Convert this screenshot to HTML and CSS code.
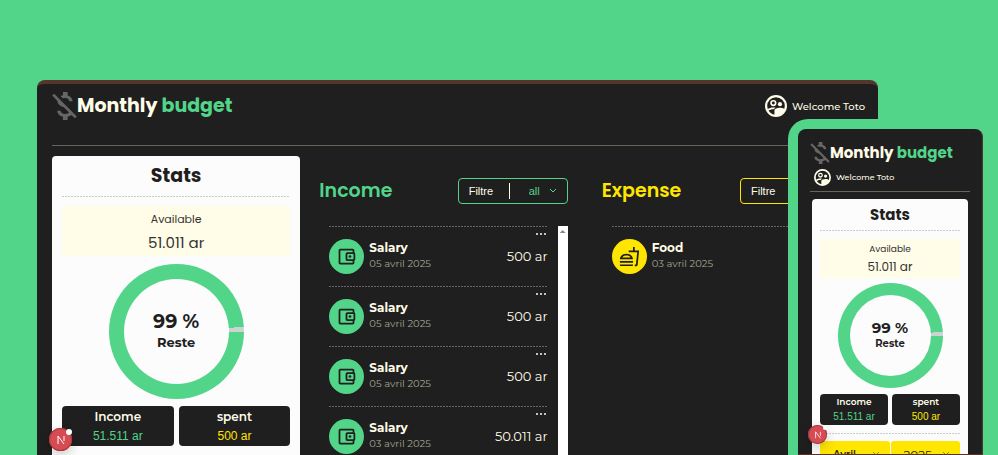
FILE: index.html
```html
<!DOCTYPE html>
<html lang="en">
<head>
<meta charset="utf-8">
<meta name="viewport" content="width=device-width, initial-scale=1">
<title>Monthly budget</title>
<link rel="stylesheet" href="styles.css">
</head>
<body>
<svg class="sprite" aria-hidden="true">
  <symbol id="logo" viewBox="4 3 16 18"><path d="M12.5 6.9c1.78 0 2.44.85 2.5 2.1h2.21c-.07-1.72-1.12-3.3-3.21-3.81V3h-3v2.16c-.53.12-1.03.3-1.48.54l1.47 1.47c.41-.17.91-.27 1.51-.27zM5.33 4.06L4.06 5.33 7.5 8.77c0 2.08 1.56 3.21 3.91 3.91l3.51 3.51c-.34.48-1.05.91-2.42.91-2.06 0-2.87-.92-2.98-2.1h-2.2c.12 2.19 1.76 3.42 3.68 3.83V21h3v-2.15c.96-.18 1.82-.55 2.45-1.12l2.22 2.22 1.27-1.27L5.33 4.06z"/></symbol>
  <symbol id="user" viewBox="2 2 20 20"><circle cx="12" cy="12" r="9" fill="none" stroke="currentColor" stroke-width="2"/><circle cx="9.6" cy="9.3" r="2.1" fill="none" stroke="currentColor" stroke-width="1.5"/><circle cx="15.6" cy="10.3" r="1.9"/><path d="M4.2 14.9c1.3-1.1 3.7-1.6 5.4-1.6.7 0 1.4.1 2.1.3-.9.4-1.5.9-1.8 1.4-1.8-.1-3.6.5-4.5 1.3z"/><path d="M10.6 21v-5c0-1.5 3-2.3 5-2.3 1.5 0 3.5.5 4.4 1.3-1.3 3.5-4.8 6-9.4 6z"/></symbol>
  <symbol id="wallet" viewBox="0 0 24 24"><path d="M21 7.28V5c0-1.1-.9-2-2-2H5c-1.11 0-2 .9-2 2v14c0 1.1.89 2 2 2h14c1.1 0 2-.9 2-2v-2.28c.59-.35 1-.98 1-1.72V9c0-.74-.41-1.37-1-1.72zM20 9v6h-7V9h7zM5 19V5h14v2h-6c-1.1 0-2 .9-2 2v6c0 1.1.9 2 2 2h6v2H5z"/><circle cx="16" cy="12" r="1.5"/></symbol>
  <symbol id="food" viewBox="0 0 24 24"><path d="M1 21.98c0 .56.45 1.01 1.01 1.01H15c.56 0 1.01-.45 1.01-1.01V21H1v.98zM8.5 8.99C4.75 8.99 1 11 1 15h15c0-4-3.75-6.01-7.5-6.01zM3.62 13c1.11-1.55 3.47-2.01 4.88-2.01s3.77.46 4.88 2.01H3.62zM1 17h15v2H1zM18 5V1h-2v4h-5l.23 2h9.56l-1.4 14H18v2h1.72c.84 0 1.53-.65 1.63-1.47L23 5h-5z"/></symbol>
  <symbol id="chevron" viewBox="0 0 8 6"><path d="M1 1l3 3 3-3" fill="none" stroke="currentColor"/></symbol>
  <symbol id="next" viewBox="0 0 10 10"><path d="M2 9V1l6 8M8 1v5" fill="none" stroke="currentColor"/></symbol>
</svg>

<main class="window">
  <header class="topbar">
    <h1 class="brand"><svg class="brand-icon"><use href="#logo"/></svg>Monthly&nbsp;<span class="green">budget</span></h1>
    <p class="welcome"><svg class="user-icon"><use href="#user"/></svg>Welcome Toto</p>
  </header>
  <div class="columns">
    <section class="stats">
      <h2 class="stats-title">Stats</h2>
      <div class="available"><span>Available</span><strong>51.011 ar</strong></div>
      <div class="donut"><strong>99 %</strong><span>Reste</span></div>
      <div class="tiles">
        <div class="tile"><span>Income</span><strong class="green">51.511 ar</strong></div>
        <div class="tile"><span>spent</span><strong class="yellow">500 ar</strong></div>
      </div>
    </section>

    <section class="panel income">
      <div class="panel-head">
        <h2>Income</h2>
        <div class="filter"><label for="income-filter">Filtre</label><select id="income-filter"><option>all</option></select><svg class="chevron"><use href="#chevron"/></svg></div>
      </div>
      <div class="scroller">
        <ul class="list">
          <li><span class="badge"><svg><use href="#wallet"/></svg></span><div class="entry"><b>Salary</b><time>05 avril 2025</time></div><div class="side"><button aria-label="More"><i></i><i></i><i></i></button><span>500 ar</span></div></li>
          <li><span class="badge"><svg><use href="#wallet"/></svg></span><div class="entry"><b>Salary</b><time>05 avril 2025</time></div><div class="side"><button aria-label="More"><i></i><i></i><i></i></button><span>500 ar</span></div></li>
          <li><span class="badge"><svg><use href="#wallet"/></svg></span><div class="entry"><b>Salary</b><time>05 avril 2025</time></div><div class="side"><button aria-label="More"><i></i><i></i><i></i></button><span>500 ar</span></div></li>
          <li><span class="badge"><svg><use href="#wallet"/></svg></span><div class="entry"><b>Salary</b><time>03 avril 2025</time></div><div class="side"><button aria-label="More"><i></i><i></i><i></i></button><span>50.011 ar</span></div></li>
        </ul>
        <div class="track"></div>
      </div>
    </section>

    <section class="panel expense">
      <div class="panel-head">
        <h2>Expense</h2>
        <div class="filter"><label for="expense-filter">Filtre</label><select id="expense-filter"><option>all</option></select><svg class="chevron"><use href="#chevron"/></svg></div>
      </div>
      <div class="scroller">
        <ul class="list">
          <li><span class="badge"><svg><use href="#food"/></svg></span><div class="entry"><b>Food</b><time>03 avril 2025</time></div></li>
        </ul>
      </div>
    </section>
  </div>
  <button class="dev" aria-label="Developer tools"><svg><use href="#next"/></svg></button>
</main>

<aside class="phone">
  <div class="screen">
    <header class="topbar">
      <h1 class="brand"><svg class="brand-icon"><use href="#logo"/></svg>Monthly&nbsp;<span class="green">budget</span></h1>
      <p class="welcome"><svg class="user-icon"><use href="#user"/></svg>Welcome Toto</p>
    </header>
    <section class="stats">
      <h2 class="stats-title">Stats</h2>
      <div class="available"><span>Available</span><strong>51.011 ar</strong></div>
      <div class="donut"><strong>99 %</strong><span>Reste</span></div>
      <div class="tiles">
        <div class="tile"><span>Income</span><strong class="green">51.511 ar</strong></div>
        <div class="tile"><span>spent</span><strong class="yellow">500 ar</strong></div>
      </div>
      <div class="period">
        <div class="pick"><select class="month" aria-label="Month"><option>Avril</option></select><svg class="chevron"><use href="#chevron"/></svg></div>
        <div class="pick"><select aria-label="Year"><option>2025</option></select><svg class="chevron"><use href="#chevron"/></svg></div>
      </div>
    </section>
    <button class="dev" aria-label="Developer tools"><svg><use href="#next"/></svg></button>
  </div>
</aside>
</body>
</html>
```
FILE: styles.css
```css
* { box-sizing: border-box; }

:root {
  --green: #52d489;
  --yellow: #ffe600;
  --dark: #1f1f1f;
  --cream: #fffde7;
  --display: Poppins, Inter, sans-serif;
  --text: Montserrat, Inter, sans-serif;
}

body {
  margin: 0;
  height: 100vh;
  overflow: hidden;
  position: relative;
  display: flex;
  padding: 80px 120px 0 37px;
  background: var(--green);
  color: var(--cream);
  font-family: var(--text);
}

h1, h2, p, ul { margin: 0; padding: 0; }
ul { list-style: none; }
svg { display: block; fill: currentColor; }
button { border: 0; padding: 0; background: none; color: inherit; }
select { appearance: none; border: 0; padding: 0; background: none; color: inherit; font: inherit; }
.sprite { position: absolute; width: 0; height: 0; }
.green { color: var(--green); }
.yellow { color: var(--yellow); }

.window {
  position: relative;
  flex: 1;
  min-width: 0;
  overflow: hidden;
  padding: 0 13px 0 15px;
  border-top: 4px solid #55342b;
  border-radius: 8px 8px 0 0;
  background: var(--dark);
}

.topbar {
  display: flex;
  justify-content: space-between;
  height: 62px;
  padding-top: 8px;
  border-bottom: 1px solid #66665a;
}
.brand {
  display: flex;
  align-items: center;
  height: 28px;
  font: 700 19px/28px var(--display);
}
.brand-icon { width: 25px; height: 28px; color: #666; }
.welcome {
  display: flex;
  align-items: center;
  gap: 5px;
  height: 28px;
  font-size: 10px;
  font-weight: 500;
}
.user-icon { width: 22px; height: 22px; }

.columns {
  display: grid;
  grid-template-columns: 1fr 19px 1fr 34px 1fr;
  padding: 10px 15px 0 0;
  align-items: start;
}

.stats {
  height: 320px;
  padding: 0 10px;
  border-radius: 4px;
  background: #fcfcfc;
  color: var(--dark);
}
.stats-title,
.period,
.list li {
  background: repeating-linear-gradient(90deg, var(--dash) 0 2px, transparent 2px 3px) top / 100% 1px no-repeat;
}
.stats-title {
  --dash: #ccc;
  height: 41px;
  background-position: bottom;
  font: 700 19px/40px var(--display);
  text-align: center;
}
.available {
  display: flex;
  flex-direction: column;
  align-items: center;
  height: 50px;
  margin: 9px 0 8px;
  padding-top: 1px;
  background: var(--cream);
  color: #333;
  font: 11px/24px var(--display);
}
.available strong { font-weight: 400; font-size: 15px; }
.donut {
  position: relative;
  display: flex;
  flex-direction: column;
  align-items: center;
  justify-content: center;
  width: 135px;
  height: 135px;
  margin: 0 auto;
  border-radius: 50%;
  background: conic-gradient(from 86deg, #ccd3d3 4deg, var(--green) 4deg);
  font-size: 13px;
  font-weight: 700;
  line-height: 20px;
  isolation: isolate;
}
.donut::before {
  content: "";
  position: absolute;
  z-index: -1;
  inset: 15px;
  border-radius: 50%;
  background: #fcfcfc;
}
.donut strong { font-size: 19px; font-weight: 700; }
.tiles { display: grid; grid-template-columns: 1fr 1fr; gap: 5px; margin-top: 7px; }
.tile {
  display: flex;
  flex-direction: column;
  align-items: center;
  height: 40px;
  border-radius: 4px;
  background: var(--dark);
  color: var(--cream);
  font-size: 12px;
  font-weight: 600;
  line-height: 21px;
}
.tile strong { font: 12px/18px "Liberation Sans", sans-serif; }

.income { --accent: var(--green); grid-column: 3; }
.expense { --accent: var(--yellow); grid-column: 5; }
.panel-head {
  display: flex;
  justify-content: space-between;
  align-items: center;
  height: 26px;
  margin: 22px 0;
}
.panel h2 { color: var(--accent); font: 600 19px/26px var(--display); }
.filter {
  position: relative;
  display: flex;
  align-items: center;
  width: 110px;
  height: 26px;
  padding: 0 10px;
  border: 1px solid var(--accent);
  border-radius: 4px;
  font: 11px/16px "Liberation Sans", sans-serif;
}
.filter label { width: 41px; border-right: 1px solid var(--cream); }
.filter select { flex: 1; padding-left: 19px; color: var(--accent); }
.chevron { position: absolute; right: 10px; width: 8px; height: 6px; color: var(--accent); pointer-events: none; }
.scroller { display: flex; }
.list { flex: 1; padding: 0 10px; }
.list li {
  --dash: #666;
  display: flex;
  align-items: center;
  gap: 5px;
  height: 60px;
}
.badge {
  display: grid;
  place-items: center;
  width: 35px;
  height: 35px;
  border-radius: 50%;
  background: var(--accent);
  color: var(--dark);
}
.badge svg { width: 21px; height: 21px; }
.entry { flex: 1; display: flex; flex-direction: column; line-height: 16px; }
.entry b { font-size: 12px; font-weight: 700; }
.entry time { color: #a3a393; font-size: 10px; }
.side { display: flex; flex-direction: column; align-items: flex-end; height: 60px; font-size: 13px; line-height: 20px; }
.side button { display: flex; gap: 2px; height: 13px; margin-bottom: 7px; padding: 7px 2px 0 0; }
.side i { width: 2px; height: 2px; border-radius: 50%; background: var(--cream); }
.track { width: 10px; background: #fff; }
.track::before {
  content: "";
  display: block;
  width: 6px;
  height: 3px;
  margin: 4px 2px;
  background: #888;
  clip-path: polygon(50% 0, 100% 100%, 0 100%);
}

.dev {
  position: absolute;
  left: 12px;
  bottom: 4px;
  display: grid;
  place-items: center;
  width: 23px;
  height: 23px;
  border-radius: 50%;
  background: #d64c52;
  box-shadow: 0 0 0 1px #a13d42 inset, 0 4px 12px #0003;
  color: #fff;
}
.dev svg { width: 10px; height: 10px; }
.dev::after {
  content: "";
  position: absolute;
  right: 0;
  top: 1px;
  width: 6px;
  height: 6px;
  border-radius: 50%;
  background: #fff;
}

.phone {
  position: absolute;
  top: 119px;
  right: 5px;
  bottom: 0;
  width: 205px;
  padding: 10px 10px 0;
  border-radius: 20px 20px 0 0;
  background: var(--green);
}
.screen {
  position: relative;
  height: 100%;
  overflow: hidden;
  padding: 0 12px;
  border-right: 1px solid #55342b;
  border-bottom: 1px solid #55342b;
  border-radius: 8px 8px 0 0;
  background: var(--dark);
}
.phone .topbar { flex-direction: column; justify-content: flex-start; gap: 4px; height: 63px; padding-top: 13px; }
.phone .brand { height: 22px; font-size: 15px; }
.phone .brand-icon { width: 20px; height: 22px; }
.phone .welcome { height: 18px; padding-left: 4px; font-size: 8px; }
.phone .user-icon { width: 17px; height: 17px; }
.phone .stats { margin: 7px 2px 0; padding: 0 8px; }
.phone .stats-title { height: 32px; font-size: 15px; line-height: 32px; }
.phone .available { height: 39px; margin: 8px 0 5px; font-size: 9px; line-height: 18px; }
.phone .available strong { font-size: 12px; }
.phone .donut { width: 105px; height: 105px; font-size: 10px; line-height: 16px; }
.phone .donut::before { inset: 12px; }
.phone .donut strong { font-size: 15px; }
.phone .tiles { gap: 4px; margin-top: 6px; }
.phone .tile { height: 31px; font-size: 9px; line-height: 16px; }
.phone .tile strong { font-size: 10px; line-height: 14px; }
.period {
  --dash: #ccc;
  display: grid;
  grid-template-columns: 1fr 1fr;
  gap: 1px;
  margin-top: 8px;
  padding-top: 8px;
}
.pick { position: relative; display: flex; align-items: center; height: 26px; border-radius: 3px; background: var(--yellow); font-size: 12px; --accent: #998a00; }
.pick select { width: 100%; padding-left: 13px; }
.pick .month { font-size: 10px; font-weight: 600; }
.phone .dev { left: 10px; bottom: 10px; width: 19px; height: 19px; }
.phone .dev svg { width: 8px; height: 8px; }
.phone .dev::after { width: 4px; height: 4px; }
```
